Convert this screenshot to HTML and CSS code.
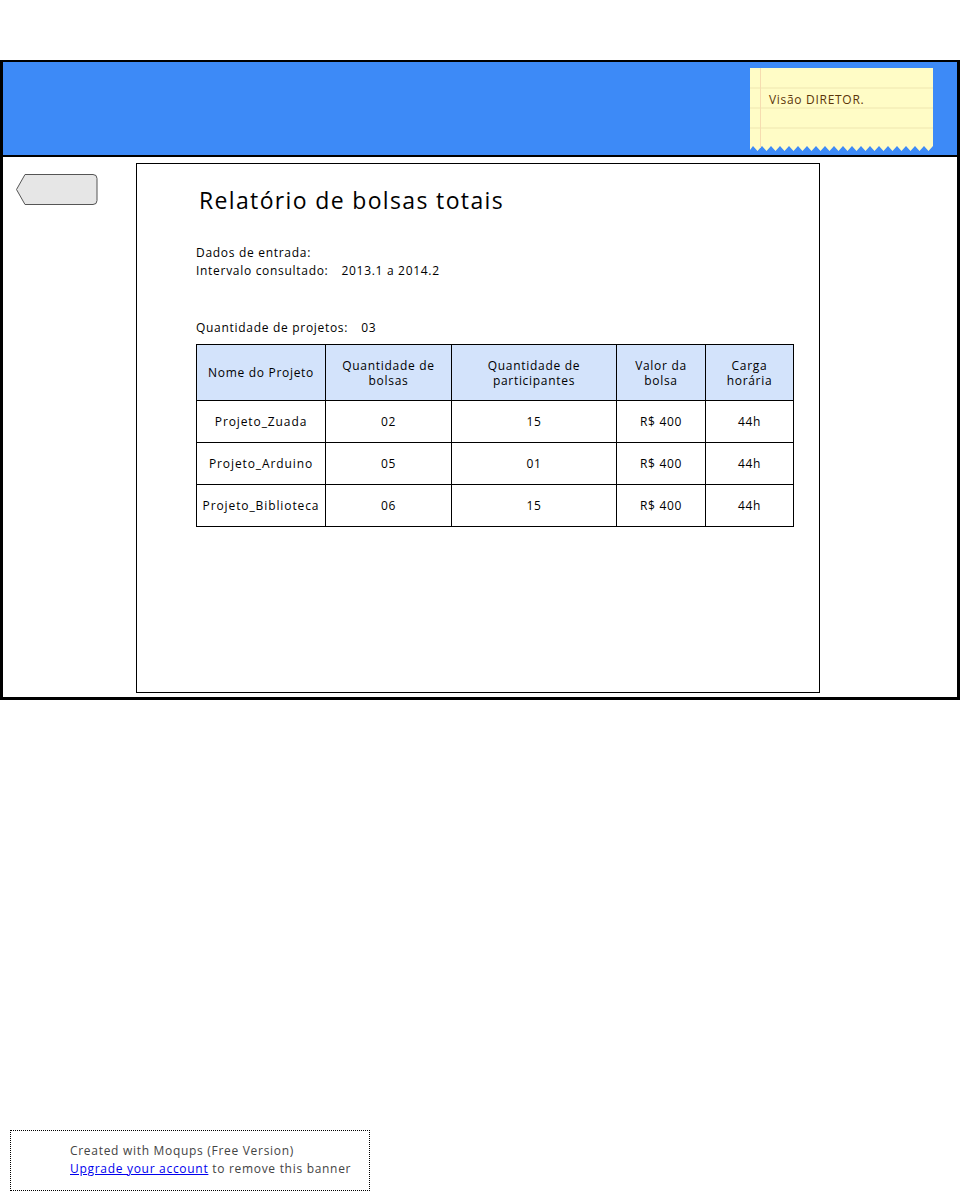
FILE: index.html
```html
<!DOCTYPE html>
<html lang="pt">
<head>
<meta charset="utf-8">
<title>Relatório de bolsas totais</title>
<link rel="stylesheet" href="styles.css">
</head>
<body>
<div class="frame">
  <header class="header">
    <div class="note">
      <svg class="note-bg" width="183" height="84" viewBox="0 0 183 84" xmlns="http://www.w3.org/2000/svg">
        <path d="M0 0 H183 V78 l-4.5 5 l-4.5 -5 l-4.5 5 l-4.5 -5 l-4.5 5 l-4.5 -5 l-4.5 5 l-4.5 -5 l-4.5 5 l-4.5 -5 l-4.5 5 l-4.5 -5 l-4.5 5 l-4.5 -5 l-4.5 5 l-4.5 -5 l-4.5 5 l-4.5 -5 l-4.5 5 l-4.5 -5 l-4.5 5 l-4.5 -5 l-4.5 5 l-4.5 -5 l-4.5 5 l-4.5 -5 l-4.5 5 l-4.5 -5 l-4.5 5 l-4.5 -5 l-4.5 5 l-4.5 -5 l-4.5 5 l-4.5 -5 l-4.5 5 l-4.5 -5 l-4.5 5 l-4.5 -5 l-4.5 5 l-4.5 -5 l-3 4 Z" fill="#fffcc6"/>
        <line x1="0" y1="20" x2="183" y2="20" stroke="#efe6b0" stroke-width="1"/>
        <line x1="0" y1="40" x2="183" y2="40" stroke="#efe6b0" stroke-width="1"/>
        <line x1="0" y1="60" x2="183" y2="60" stroke="#efe6b0" stroke-width="1"/>
        <line x1="10.5" y1="0" x2="10.5" y2="80" stroke="#f6dcb0" stroke-width="1"/>
      </svg>
      <span class="note-text">Visão DIRETOR.</span>
    </div>
  </header>
  <div class="body">
    <aside class="side">
      <button class="back" type="button" aria-label="Voltar">
        <svg width="84" height="33" viewBox="0 0 84 33" xmlns="http://www.w3.org/2000/svg">
          <path d="M10 1.5 H78 a4 4 0 0 1 4 4 V27.5 a4 4 0 0 1 -4 4 H10 L1.5 16.5 Z" fill="#e6e6e6" stroke="#555" stroke-width="1"/>
        </svg>
      </button>
    </aside>
    <main class="panel">
      <h1 class="title">Relatório de bolsas totais</h1>
      <p class="line">Dados de entrada:</p>
      <p class="line">Intervalo consultado:<span class="val">2013.1 a 2014.2</span></p>
      <p class="line count">Quantidade de projetos:<span class="val">03</span></p>
      <table class="grid">
        <colgroup>
          <col class="c1"><col class="c2"><col class="c3"><col class="c4"><col class="c5">
        </colgroup>
        <thead>
          <tr>
            <th>Nome do Projeto</th>
            <th>Quantidade de<br>bolsas</th>
            <th>Quantidade de<br>participantes</th>
            <th>Valor da<br>bolsa</th>
            <th>Carga<br>horária</th>
          </tr>
        </thead>
        <tbody>
          <tr><td>Projeto_Zuada</td><td>02</td><td>15</td><td>R$ 400</td><td>44h</td></tr>
          <tr><td>Projeto_Arduino</td><td>05</td><td>01</td><td>R$ 400</td><td>44h</td></tr>
          <tr><td>Projeto_Biblioteca</td><td>06</td><td>15</td><td>R$ 400</td><td>44h</td></tr>
        </tbody>
      </table>
    </main>
  </div>
</div>
<div class="banner">
  <p>Created with Moqups (Free Version)</p>
  <p><a href="#">Upgrade your account</a> to remove this banner</p>
</div>
</body>
</html>
```
FILE: styles.css
```css
* { box-sizing: border-box; }
html, body { margin: 0; padding: 0; background: #fff; }
body {
  font-family: "Open Sans", "DejaVu Sans", sans-serif;
  font-size: 12px;
  letter-spacing: 0.7px;
  color: #000;
  width: 960px;
  height: 1200px;
  padding-top: 60px;
  position: relative;
}
.frame {
  width: 960px;
  height: 640px;
  border: 3px solid #000;
  border-top-width: 2px;
  display: flex;
  flex-direction: column;
}
.header {
  height: 95px;
  background: #3d8af7;
  border-bottom: 2px solid #000;
  display: flex;
  justify-content: flex-end;
  align-items: flex-start;
  padding: 6px 24px 0 0;
  flex: none;
}
.note {
  position: relative;
  width: 183px;
  height: 84px;
}
.note-bg { position: absolute; left: 0; top: 0; display: block; }
.note-text {
  position: relative;
  display: block;
  padding: 24px 0 0 19px;
  font-size: 12px;
  color: #5b3508;
  line-height: 16px;
}
.body {
  flex: 1;
  display: flex;
  padding: 6px 0 4px 0;
}
.side {
  width: 133px;
  flex: none;
  padding: 10px 0 0 12px;
}
.back {
  display: block;
  padding: 0;
  margin: 0;
  border: 0;
  background: none;
  width: 84px;
  height: 33px;
}
.back svg { display: block; }
.panel {
  width: 684px;
  border: 1px solid #000;
  padding: 20px 0 0 59px;
}
.title {
  margin: 0 0 0 3px;
  font-weight: normal;
  font-size: 23px;
  line-height: 32px;
  letter-spacing: 1.35px;
}
.line {
  margin: 0;
  line-height: 18px;
}
.title + .line { margin-top: 28px; }
.count { margin-top: 39px; }
.val { margin-left: 13px; }
.grid {
  margin-top: 7px;
  border-collapse: collapse;
  width: 597px;
  table-layout: fixed;
  text-align: center;
}
.c1 { width: 129px; }
.c2 { width: 126px; }
.c3 { width: 165px; }
.c4 { width: 89px; }
.c5 { width: 88px; }
.grid th, .grid td {
  border: 1px solid #000;
  padding: 0;
  font-weight: normal;
  line-height: 15px;
}
.grid td:first-child { letter-spacing: 0.9px; }
.grid th {
  background: #d3e3fb;
  height: 56px;
}
.grid td { height: 42px; }
.banner {
  position: absolute;
  left: 10px;
  top: 1130px;
  width: 360px;
  height: 61px;
  border: 1px dotted #000;
  padding: 11px 0 0 59px;
  color: #444;
  font-size: 12px;
}
.banner p { margin: 0; line-height: 18px; }
.banner a { color: #0000ee; text-decoration: underline; }
```
